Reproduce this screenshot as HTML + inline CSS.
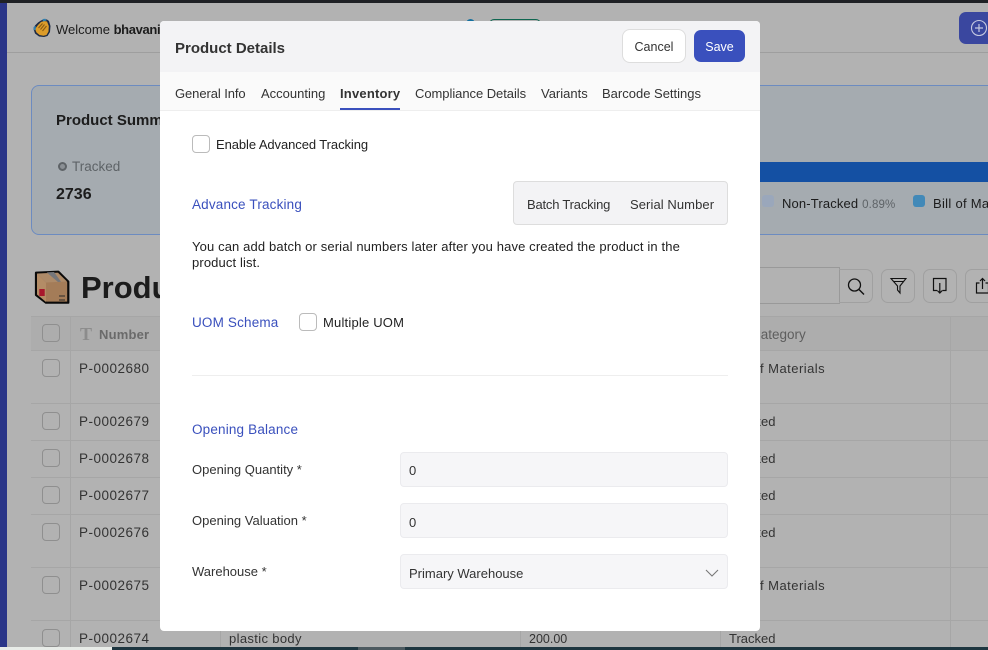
<!DOCTYPE html>
<html lang="en">
<head>
<meta charset="utf-8">
<title>Product Details</title>
<style>
html,body{margin:0;padding:0;width:988px;height:650px;overflow:hidden;background:#b2b2b2}
body{position:relative;font-family:"Liberation Sans","Noto Sans CJK JP",sans-serif;font-size:13px;color:#222}
.a{position:absolute;white-space:nowrap}
.t{position:absolute;white-space:nowrap;line-height:18px;font-size:13px}
.r{color:#333;font-size:13.5px;letter-spacing:.5px}
.m{letter-spacing:.47px}
.hl{position:absolute;height:1px;background:#a6a6a6}
.vl{position:absolute;width:1px;background:#a6a6a6}
.cb{position:absolute;box-sizing:border-box;width:18px;height:18px;border:1px solid #bbb;border-radius:4px;background:#fff}
.cd{border-color:#8f8f8f;background:#b2b2b2}
.ib{position:absolute;box-sizing:border-box;width:34px;height:34px;top:269px;border:1px solid #a0a0a0;border-radius:7px}
.ib svg{position:absolute;left:7px;top:7px}
.inp{position:absolute;left:240px;width:328px;height:35px;box-sizing:border-box;background:#f6f6f8;border:1px solid #ebebee;border-radius:4px;padding-left:8px;line-height:36px;font-size:13px;color:#333}
.blue{color:#3a50bd}
.sec{letter-spacing:.17px;font-size:13.5px}
.tab{position:absolute;top:64px;line-height:18px;font-size:13px;color:#333;white-space:nowrap}
.lab{position:absolute;left:32px;line-height:18px;font-size:13px;color:#333;white-space:nowrap}
</style>
</head>
<body>
<!-- dimmed page behind the dialog -->
<div class="a" style="left:0;top:0;width:988px;height:650px;background:#b2b2b2">
  <div class="a" style="left:0;top:0;width:7px;height:650px;background:#2a3588"></div>
  <div class="hl" style="left:7px;top:52px;width:981px;background:#9e9e9e"></div>

  <svg class="a" style="left:32px;top:18px" width="20" height="20" viewBox="0 0 20 20"><path d="M1.500 11 L3 7.500 L6 4.500 L9 2.500 L12 1.200 L15 1.500 L17 3 L18.500 8 L18 14 L15.500 18 L12 19 L7 18.500 L3 15.500 Z" fill="#1d2a44"/><path d="M3 11 L6 7 L9 4 L12 3 L15 3.500 L16.800 8 L16.500 13.500 L14.500 17 L11.500 17.700 L7.500 17 L4.500 14.500 Z" fill="#dc9c2a"/><path d="M6.500 10 L10.500 5.500 M8.500 11.500 L12.500 6.500 M10.500 13 L14.500 8" stroke="#8a5c14" stroke-width="1.100"/><path d="M10.500 1 L13.500 .7 L14.500 2.600 L11 3.500 Z M1.500 9 L3.800 8 L3.800 11.500 L1.800 12.500 Z" fill="#2f7fb0"/></svg>
  <div class="t" style="left:56px;top:21px;color:#1c1c1c">Welcome <b style="letter-spacing:-.35px">bhavani</b></div>

  <div class="a" style="left:466px;top:19px;width:9px;height:9px;border-radius:50%;background:#14709f"></div>
  <div class="a" style="left:489px;top:19px;width:52px;height:20px;box-sizing:border-box;border:1px solid #0f6650;border-radius:5px"></div>

  <div class="a" style="left:959px;top:12px;width:40px;height:32px;border-radius:7px;background:#3a479f"></div>
  <svg class="a" style="left:970px;top:19px" width="18" height="18" viewBox="0 0 18 18"><circle cx="9" cy="9" r="7.500" fill="none" stroke="#c4c8e0" stroke-width="1.100"/><path d="M9 5v8M5 9h8" stroke="#c4c8e0" stroke-width="1.200"/></svg>

  <!-- summary card -->
  <div class="a" style="left:31px;top:85px;width:970px;height:150px;box-sizing:border-box;border:1px solid #6c8bc0;border-radius:8px;background:#a5abb0"></div>
  <div class="t" style="left:56px;top:111px;font-size:15px;font-weight:bold;color:#1c1c1c;line-height:19px">Product Summary</div>
  <div class="a" style="left:58px;top:162px;width:9px;height:9px;box-sizing:border-box;border:2px solid #5e6367;border-radius:50%;background:#8b9095"></div>
  <div class="t" style="left:72px;top:158px;font-size:13.500px;color:#5e6367">Tracked</div>
  <div class="t" style="left:56px;top:186px;font-size:16px;font-weight:bold;color:#1c1c1c">2736</div>
  <div class="a" style="left:700px;top:162px;width:288px;height:20px;background:#1450a3"></div>
  <div class="a" style="left:762px;top:195px;width:12px;height:12px;border-radius:3px;background:#9aa7bb"></div>
  <div class="t" style="left:782px;top:195px;color:#1c1c1c;letter-spacing:.15px">Non-Tracked <span style="color:#5e6367;font-size:11.500px">0.89%</span></div>
  <div class="a" style="left:913px;top:195px;width:12px;height:12px;border-radius:3px;background:#4289b8"></div>
  <div class="t" style="left:933px;top:195px;color:#1c1c1c;letter-spacing:.3px">Bill of Materials</div>

  <!-- title -->
  <svg class="a" style="left:34px;top:270px" width="37" height="35" viewBox="0 0 37 35"><path d="M2 2.700 L24.300 1.700 L34.300 11.700 L34.300 32.700 L12 32.700 L2 25 Z" fill="#a47c58" stroke="#0a0a0a" stroke-width="2.200" stroke-linejoin="round"/><path d="M3 3.500 L24 2.700 L33 11.500 L12 12.500 Z" fill="#ad8a68"/><path d="M3 3.700 L12 12.700 L12 32 L3 24.500 Z" fill="#b38c66"/><path d="M12.700 2.400 L20 2 L27 11.800 L24 12 Z" fill="#75767a"/><rect x="5.300" y="19" width="5.400" height="7" fill="#a8182c"/><path d="M25 26h6M25 30h6" stroke="#2a2a2a" stroke-width="1"/></svg>
  <div class="t" style="left:81px;top:269px;font-size:31px;line-height:38px;font-weight:bold;color:#1c1c1c">Products</div>

  <div class="a" style="left:700px;top:267px;width:140px;height:37px;box-sizing:border-box;border:1px solid #999"></div>
  <div class="ib" style="left:839px;border-left:0;border-radius:0 7px 7px 0">
    <svg width="18" height="18" viewBox="0 0 18 18" style="left:8px;top:8px"><circle cx="7.500" cy="7" r="6" fill="none" stroke="#111" stroke-width="1.300"/><path d="M12 11.500 L17 16.500" stroke="#111" stroke-width="1.400"/></svg>
  </div>
  <div class="ib" style="left:881px">
    <svg width="18" height="18" viewBox="0 0 18 18"><path d="M2 1.500 H17 L11 9 V16 L8.500 13 V9 Z M4.500 4.500 H14.500" fill="none" stroke="#111" stroke-width="1.100"/></svg>
  </div>
  <div class="ib" style="left:923px">
    <svg width="18" height="18" viewBox="0 0 18 18"><path d="M6 13.500 H2.500 V1.500 H15 V13.500 H11.500 M8.800 6 V16 M6.300 13.500 L8.800 16 L11.300 13.500" fill="none" stroke="#111" stroke-width="1.200"/></svg>
  </div>
  <div class="ib" style="left:965px">
    <svg width="18" height="18" viewBox="0 0 18 18"><path d="M6.500 6 H3.500 V16 H15.500 V6 H12.500 M9.500 12 V1.500 M7 4 L9.500 1.500 L12 4" fill="none" stroke="#111" stroke-width="1.200"/></svg>
  </div>

  <!-- table -->
  <div class="a" style="left:31px;top:317px;width:957px;height:34px;background:#adadad"></div>
  <div class="hl" style="left:31px;top:316px;width:957px"></div>
  <div class="hl" style="left:31px;top:350px;width:957px"></div>
  <div class="hl" style="left:31px;top:403px;width:957px"></div>
  <div class="hl" style="left:31px;top:440px;width:957px"></div>
  <div class="hl" style="left:31px;top:477px;width:957px"></div>
  <div class="hl" style="left:31px;top:514px;width:957px"></div>
  <div class="hl" style="left:31px;top:567px;width:957px"></div>
  <div class="hl" style="left:31px;top:620px;width:957px"></div>
  <div class="vl" style="left:70px;top:316px;height:334px"></div>
  <div class="vl" style="left:220px;top:620px;height:30px"></div>
  <div class="vl" style="left:520px;top:620px;height:30px"></div>
  <div class="vl" style="left:720px;top:316px;height:334px"></div>
  <div class="vl" style="left:950px;top:316px;height:334px"></div>

  <div class="cb cd" style="left:42px;top:324px;background:#adadad"></div>
  <div class="cb cd" style="left:42px;top:359px"></div>
  <div class="cb cd" style="left:42px;top:412px"></div>
  <div class="cb cd" style="left:42px;top:449px"></div>
  <div class="cb cd" style="left:42px;top:486px"></div>
  <div class="cb cd" style="left:42px;top:523px"></div>
  <div class="cb cd" style="left:42px;top:576px"></div>
  <div class="cb cd" style="left:42px;top:629px"></div>

  <div class="t" style="left:80px;top:325px;font-family:'Liberation Serif',serif;font-size:18px;font-weight:bold;color:#8c8c8c">T</div>
  <div class="t" style="left:99px;top:326px;font-weight:bold;color:#6a6a6a;letter-spacing:.2px">Number</div>
  <div class="t r" style="left:79px;top:360px">P-0002680</div>
  <div class="t r" style="left:79px;top:413px">P-0002679</div>
  <div class="t r" style="left:79px;top:450px">P-0002678</div>
  <div class="t r" style="left:79px;top:487px">P-0002677</div>
  <div class="t r" style="left:79px;top:524px">P-0002676</div>
  <div class="t r" style="left:79px;top:577px">P-0002675</div>
  <div class="t r" style="left:79px;top:630px">P-0002674</div>
  <div class="t" style="left:229px;top:630px;color:#333;letter-spacing:.35px">plastic body</div>
  <div class="t" style="left:529px;top:630px;color:#333;font-size:12.500px">200.00</div>
  <div class="t" style="left:751px;top:326px;font-size:13.500px;color:#5e5e5e">Category</div>
  <div class="t m" style="left:729px;top:360px;color:#333">Bill of Materials</div>
  <div class="t" style="left:729px;top:413px;color:#333">Tracked</div>
  <div class="t" style="left:729px;top:450px;color:#333">Tracked</div>
  <div class="t" style="left:729px;top:487px;color:#333">Tracked</div>
  <div class="t" style="left:729px;top:524px;color:#333">Tracked</div>
  <div class="t m" style="left:729px;top:577px;color:#333">Bill of Materials</div>
  <div class="t" style="left:729px;top:630px;color:#333">Tracked</div>
</div>

<!-- browser chrome strips -->
<div class="a" style="left:0;top:0;width:988px;height:3px;background:#1f2125"></div>
<div class="a" style="left:0;top:647px;width:112px;height:3px;background:#e8ece8"></div>
<div class="a" style="left:112px;top:647px;width:876px;height:3px;background:#1e3640"></div>
<div class="a" style="left:358px;top:647px;width:47px;height:3px;background:#4d5a60"></div>

<!-- modal -->
<div class="a" style="left:160px;top:21px;width:600px;height:610px;background:#fff;border-radius:4px;overflow:hidden">
  <div class="a" style="left:0;top:0;width:600px;height:51px;background:#f3f3f5"></div>
  <div class="a" style="left:0;top:51px;width:600px;height:38px;background:#fafafa;border-bottom:1px solid #eee"></div>
  <div class="t" style="left:15px;top:18px;font-size:15px;font-weight:bold;color:#333;line-height:19px">Product Details</div>

  <div class="a" style="left:462px;top:8px;width:64px;height:34px;box-sizing:border-box;background:#fff;border:1px solid #ddd;border-radius:8px;text-align:center;line-height:35px;font-size:12.500px;color:#333">Cancel</div>
  <div class="a" style="left:534px;top:9px;width:51px;height:32px;background:#3a50bd;border-radius:7px;text-align:center;line-height:35px;font-size:12.500px;color:#fff">Save</div>

  <div class="tab" style="left:15px;letter-spacing:-.08px">General Info</div>
  <div class="tab" style="left:101px">Accounting</div>
  <div class="tab blue" style="left:180px;font-weight:bold;letter-spacing:.2px">Inventory</div>
  <div class="a" style="left:180px;top:87px;width:60px;height:2px;background:#3a50bd"></div>
  <div class="tab" style="left:255px;letter-spacing:-.05px">Compliance Details</div>
  <div class="tab" style="left:381px">Variants</div>
  <div class="tab" style="left:442px">Barcode Settings</div>

  <div class="cb" style="left:32px;top:114px"></div>
  <div class="t" style="left:56px;top:115px;color:#222;letter-spacing:-.08px">Enable Advanced Tracking</div>

  <div class="t blue sec" style="left:32px;top:175px">Advance Tracking</div>

  <div class="a" style="left:353px;top:160px;width:215px;height:44px;box-sizing:border-box;background:#f3f3f5;border:1px solid #ddd;border-radius:4px"></div>
  <div class="t" style="left:367px;top:175px;color:#333;letter-spacing:-.2px">Batch Tracking</div>
  <div class="t" style="left:470px;top:175px;color:#333;letter-spacing:.08px">Serial Number</div>

  <div class="a" style="left:32px;top:218px;font-size:13px;line-height:16px;color:#222;letter-spacing:.13px">You can add batch or serial numbers later after you have created the product in the<br>product list.</div>

  <div class="t blue sec" style="left:32px;top:293px">UOM Schema</div>
  <div class="cb" style="left:139px;top:292px"></div>
  <div class="t" style="left:163px;top:293px;color:#222;letter-spacing:.2px">Multiple UOM</div>

  <div class="hl" style="left:32px;top:354px;width:536px;background:#eee"></div>

  <div class="t blue sec" style="left:32px;top:400px">Opening Balance</div>

  <div class="lab" style="top:440px">Opening Quantity *</div>
  <div class="inp" style="top:431px">0</div>
  <div class="lab" style="top:491px">Opening Valuation *</div>
  <div class="inp" style="top:482px;line-height:38px">0</div>
  <div class="lab" style="top:542px">Warehouse *</div>
  <div class="inp" style="top:533px;line-height:38px">Primary Warehouse</div>
  <svg class="a" style="left:545px;top:547px" width="14" height="10" viewBox="0 0 14 10"><path d="M1 2 L7 8 L13 2" fill="none" stroke="#777" stroke-width="1.100"/></svg>
</div>
</body>
</html>
